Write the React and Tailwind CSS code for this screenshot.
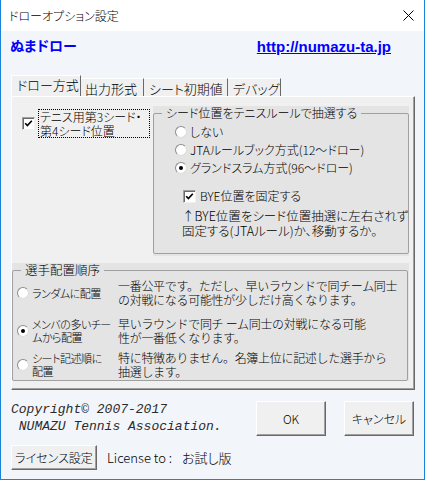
import React from "react";

const Check = () => (
  <span className="w-[13px] h-[13px] shrink-0 bg-white border border-t-[#a0a0a0] border-l-[#a0a0a0] border-r-[#f0f0f0] border-b-[#f0f0f0] shadow-[inset_1px_1px_0_#696969] flex items-center justify-center">
    <svg width="9" height="9" viewBox="0 0 9 9">
      <path d="M1.2 4.2 L3.4 6.6 L7.8 1.8" fill="none" stroke="#000" strokeWidth="1.7" />
    </svg>
  </span>
);

const Radio = ({ on }) => (
  <span className="w-[12px] h-[12px] shrink-0 rounded-full bg-white border border-t-[#8c8c8c] border-l-[#8c8c8c] border-r-[#dcdcdc] border-b-[#dcdcdc] flex items-center justify-center">
    {on && <span className="w-[4px] h-[4px] rounded-full bg-black" />}
  </span>
);

const Btn = ({ className, children }) => (
  <div
    className={
      "bg-[#f0f0f0] border border-t-white border-l-white border-r-[#696969] border-b-[#696969] shadow-[inset_-1px_-1px_0_#a0a0a0] flex items-center justify-center text-[12px] leading-[14px] " +
      className
    }
  >
    {children}
  </div>
);

export default function App() {
  return (
    <div className="w-[425px] h-[480px] flex flex-col bg-[#f2f5fa] border-x border-b border-[#1883d7] font-['Noto_Sans_CJK_JP',sans-serif] font-light [font-feature-settings:'palt'] text-black overflow-hidden">
      {/* title bar */}
      <div className="h-[31px] shrink-0 bg-white flex items-center justify-between pl-[8px] pr-[10px]">
        <span className="text-[12px] leading-[14px]">ドローオプション設定</span>
        <svg width="11" height="11" viewBox="0 0 11 11">
          <path d="M0.5 0.5L10.5 10.5M10.5 0.5L0.5 10.5" stroke="#000" strokeWidth="1" />
        </svg>
      </div>

      {/* header */}
      <div className="h-[44px] shrink-0 flex items-start pl-[9px] pr-[33px]">
        <span className="mt-[6px] text-[14px] leading-[16px] font-bold text-[#0000ff]">ぬまドロー</span>
        <a className="ml-auto mt-[7px] font-['Liberation_Sans',sans-serif] text-[15px] leading-[17px] font-bold underline text-[#0000ff]">
          http://numazu-ta.jp
        </a>
      </div>

      {/* tabs */}
      <div className="h-[21px] shrink-0 flex items-end pl-[10px] text-[13px] leading-[15px]">
        <div className="w-[70px] h-[21px] bg-[#f0f0f0] border-l border-t border-white border-r border-r-[#696969] pl-[5px] pt-[1px]">
          ドロー方式
        </div>
        <div className="w-[63px] h-[18px] bg-[#f0f0f0] border-t border-white border-r border-r-[#696969] pl-[4px] pt-[2px]">
          出力形式
        </div>
        <div className="w-[84px] h-[18px] bg-[#f0f0f0] border-t border-white border-r border-r-[#696969] pl-[5px] pt-[2px]">
          シート初期値
        </div>
        <div className="w-[53px] h-[18px] bg-[#f0f0f0] border-t border-white border-r border-r-[#696969] pl-[5px] pt-[2px]">
          デバッグ
        </div>
      </div>

      {/* panel */}
      <div className="ml-[10px] w-[404px] h-[294px] shrink-0 bg-[#f0f0f0] border-l border-t border-white border-r border-b border-r-[#696969] border-b-[#696969] shadow-[inset_-1px_-1px_0_#a0a0a0] pt-[9px] flex flex-col">
        <div className="flex">
          <div className="w-[141px] pl-[10px] flex items-start">
            <div className="mt-[11px]">
              <Check />
            </div>
            <div className="ml-[3px] mt-[3px] w-[112px] h-[29px] border border-dotted border-black pl-[1px] text-[12px] leading-[13.5px] whitespace-nowrap">
              <div>テニス用第3シード・</div>
              <div>第4シード位置</div>
            </div>
          </div>
          <div className="w-[256px] h-[150px] bg-[#e4e4e4]">
            <fieldset className="w-[255px] h-[148px] border border-[#a0a0a0] rounded-[2px]">
              <legend className="ml-[8px] px-[4px] text-[12px] leading-[14px]">
                シード位置をテニスルールで抽選する
              </legend>
              <div className="pl-[21px] mt-[3px] text-[12px] leading-[14px]">
                <div className="h-[18px] flex items-center gap-[3px]">
                  <Radio />
                  <span>しない</span>
                </div>
                <div className="h-[18px] flex items-center gap-[3px]">
                  <Radio />
                  <span>JTAルールブック方式(12〜ドロー)</span>
                </div>
                <div className="h-[18px] flex items-center gap-[3px]">
                  <Radio on />
                  <span>グランドスラム方式(96〜ドロー)</span>
                </div>
              </div>
              <div className="pl-[29px] mt-[10px] h-[18px] flex items-center gap-[4px] text-[12px] leading-[14px]">
                <Check />
                <span>BYE位置を固定する</span>
              </div>
              <div className="pl-[28px] mt-[4px] text-[12.5px] leading-[14.5px] whitespace-nowrap">
                <div>↑BYE位置をシード位置抽選に左右されず</div>
                <div>固定する(JTAルール)か、移動するか。</div>
              </div>
            </fieldset>
          </div>
        </div>

        <div className="mt-[7px] w-[397px] bg-[#e4e4e4]">
          <fieldset className="w-[396px] border border-[#a0a0a0] rounded-[2px] pb-[1px]">
            <legend className="ml-[8px] px-[4px] text-[12.5px] leading-[14px]">選手配置順序</legend>
            {[
              {
                on: false,
                label: ["ランダムに配置"],
                desc: ["一番公平です。ただし、早いラウンドで同チーム同士", "の対戦になる可能性が少しだけ高くなります。"],
                mt: "mt-[2px]",
              },
              {
                on: true,
                label: ["メンバの多いチー", "ムから配置"],
                desc: ["早いラウンドで同チ ーム同士の対戦になる可能", "性が一番低くなります。"],
                mt: "mt-[10px]",
              },
              {
                on: false,
                label: ["シート記述順に", "配置"],
                desc: ["特に特徴ありません。名簿上位に記述した選手から", "抽選します。"],
                mt: "mt-[6px]",
              },
            ].map((r, i) => (
              <div key={i} className={"flex items-center pl-[4px] " + r.mt}>
                <Radio on={r.on} />
                <div className="ml-[3px] w-[84px] text-[11px] leading-[13px] tracking-[-0.5px] whitespace-nowrap">
                  {r.label.map((l, j) => (
                    <div key={j}>{l}</div>
                  ))}
                </div>
                <div className="ml-[2px] text-[12px] leading-[14px] tracking-[-0.3px] whitespace-nowrap [font-feature-settings:normal]">
                  {r.desc.map((l, j) => (
                    <div key={j}>{l}</div>
                  ))}
                </div>
              </div>
            ))}
          </fieldset>
        </div>
      </div>

      {/* bottom */}
      <div className="mt-[11px] flex items-start pl-[10px] pr-[10px]">
        <div className="font-['Liberation_Mono',monospace] font-normal italic text-[13px] leading-[17px] text-[#2b2b2b] whitespace-pre">
          <div>Copyright© 2007-2017</div>
          <div> NUMAZU Tennis Association.</div>
        </div>
        <Btn className="ml-auto w-[70px] h-[35px]">OK</Btn>
        <Btn className="ml-[18px] w-[70px] h-[35px]">キャンセル</Btn>
      </div>
      <div className="mt-[9px] flex items-center pl-[10px]">
        <Btn className="w-[86px] h-[25px]">ライセンス設定</Btn>
        <span className="ml-[10px] text-[13px] leading-[15px]">
          License to :<span className="ml-[10px]">お試し版</span>
        </span>
      </div>
    </div>
  );
}
